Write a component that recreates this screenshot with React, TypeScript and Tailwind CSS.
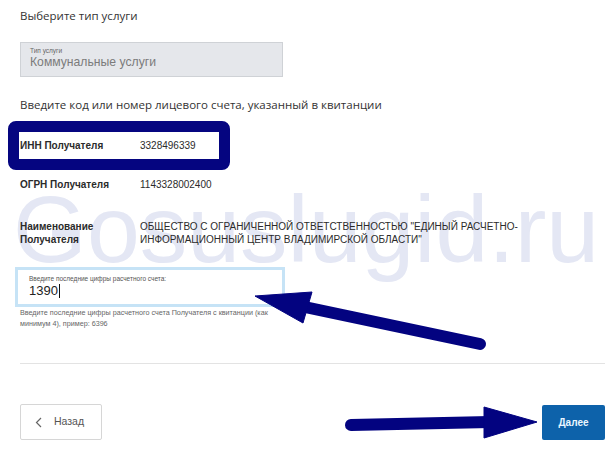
import React from "react";

function Arrows() {
  return (
    <svg
      className="pointer-events-none absolute inset-0 z-20"
      width="616"
      height="460"
      viewBox="0 0 616 460"
    >
      <g fill="#030380" stroke="#030380">
        <line x1="480" y1="344" x2="300" y2="306" strokeWidth="12" strokeLinecap="round" />
        <polygon points="255,296 312,292 303,323" strokeWidth="1" strokeLinejoin="round" />
        <line x1="351" y1="425" x2="490" y2="422" strokeWidth="12" strokeLinecap="round" />
        <polygon points="484,407 537,422 484,438" strokeWidth="1" strokeLinejoin="round" />
      </g>
    </svg>
  );
}

function InfoRow({ label, value }: { label: React.ReactNode; value: React.ReactNode }) {
  return (
    <div className="flex text-[10px] leading-[13px] text-[#2b2b2b]">
      <div className="w-[120px] shrink-0 font-bold">{label}</div>
      <div className="w-[390px]">{value}</div>
    </div>
  );
}

export default function App() {
  return (
    <div className="relative h-[460px] w-[616px] overflow-hidden bg-white font-['Liberation_Sans',Arial,sans-serif]">
      <div className="pointer-events-none absolute left-[13px] top-[182px] z-0 whitespace-nowrap text-[95px] leading-none text-[#e4e7f4]">
        Gosuslugid.ru
      </div>

      <div className="relative z-10 flex flex-col px-5 pt-[7px]">
        <p className="font-['Open_Sans',sans-serif] text-[11.5px] leading-[18px] text-[#333]">
          Выберите тип услуги
        </p>

        <div className="mt-[17px] flex h-[35px] w-[263px] flex-col border border-[#cfd2d6] bg-[#e5e7eb] px-[9px] pt-[4px]">
          <span className="text-[6.5px] leading-[8px] text-[#666]">Тип услуги</span>
          <span className="text-[12.2px] leading-[15px] text-[#7b7b7b]">Коммунальные услуги</span>
        </div>

        <p className="mt-[19px] font-['Open_Sans',sans-serif] text-[11.5px] leading-[18px] text-[#333]">
          Введите код или номер лицевого счета, указанный в квитанции
        </p>

        <div className="-ml-[12px] mt-[7px] w-[222px] rounded-lg border-[11px] border-[#050580] bg-white py-[7px] pl-[1px]">
          <InfoRow label="ИНН Получателя" value="3328496339" />
        </div>

        <div className="mt-[8px]">
          <InfoRow label="ОГРН Получателя" value="1143328002400" />
        </div>

        <div className="mt-[29px]">
          <InfoRow
            label={
              <>
                Наименование
                <br />
                Получателя
              </>
            }
            value={
              <>
                ОБЩЕСТВО С ОГРАНИЧЕННОЙ ОТВЕТСТВЕННОСТЬЮ "ЕДИНЫЙ РАСЧЕТНО-
                <br />
                ИНФОРМАЦИОННЫЙ ЦЕНТР ВЛАДИМИРСКОЙ ОБЛАСТИ"
              </>
            }
          />
        </div>

        <div className="-ml-[5px] mt-[21px] flex h-[40px] w-[270px] flex-col border-[3px] border-[#c6e3f6] bg-white px-[11px] pt-[5px]">
          <span className="text-[6.5px] leading-[8px] text-[#555]">
            Введите последние цифры расчетного счета:
          </span>
          <span className="flex items-center text-[13px] leading-[16px] text-[#222]">
            1390
            <span className="ml-[1px] inline-block h-[14px] w-px bg-[#111]" />
          </span>
        </div>

        <p className="w-[270px] text-[7.2px] leading-[11px] text-[#666]">
          Введите последние цифры расчетного счета Получателя с квитанции (как минимум 4), пример: 6396
        </p>

        <div className="mt-[34px] h-px w-[585px] bg-[#e3e3e3]" />

        <div className="mt-[40px] flex w-[585px] items-center justify-between">
          <button className="flex h-[36px] w-[82px] items-center gap-[12px] rounded-[2px] border border-[#d6d6d6] bg-white pl-[14px] text-[10.5px] text-[#555]">
            <svg width="7" height="11" viewBox="0 0 7 11">
              <path d="M6 1 L1.5 5.5 L6 10" fill="none" stroke="#666" strokeWidth="1.2" />
            </svg>
            Назад
          </button>
          <button className="h-[35px] w-[63px] rounded-[2px] bg-[#0d62aa] text-[10px] font-bold text-[#e9f6ff]">
            Далее
          </button>
        </div>
      </div>

      <Arrows />
    </div>
  );
}
